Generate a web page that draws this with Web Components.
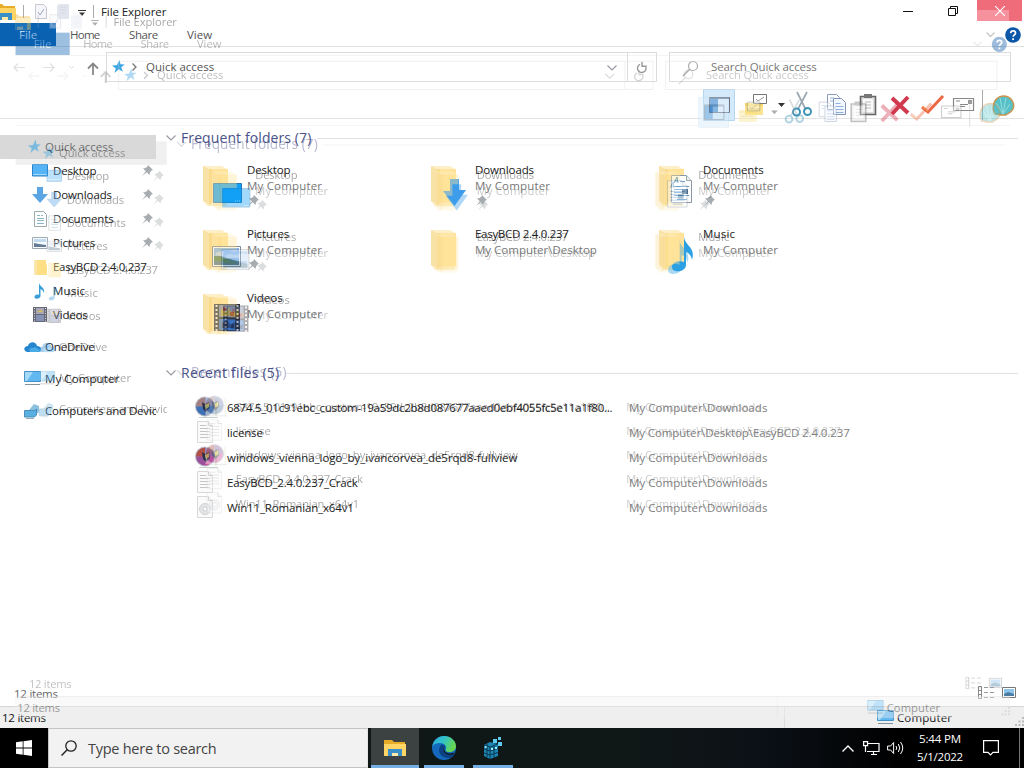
<!DOCTYPE html>
<html lang="en">
<head>
<meta charset="utf-8">
<title>File Explorer</title>
<style>
  html, body { margin: 0; height: 100%; overflow: hidden; background: #fff; }
  body { font-family: "Open Sans", "Noto Sans", sans-serif; font-size: 11.5px; color: #222; }
</style>
</head>
<body>
<desk-top></desk-top>

<script>
/* ═══════════════════════════════════════════════════════════════
   Icons: name -> [width, height, svg content]
   ═══════════════════════════════════════════════════════════════ */
const FOLDER = `
  <path d="M2 5h19l5 3v37H6l-4-5z" fill="#fdefc8"/>
  <path d="M2 5l6 3v35l-6-3z" fill="#f9e2a6"/>
  <path d="M8 8h19v33l-19 1z" fill="#ffe39a"/>
  <path d="M8 8h3v34l-3 3z" fill="#fada8c"/>`;

const ORB = (a, b, c, d) => `
  <path d="M2 2h21v19H2z" fill="#fff"/><path d="M5 21.5h19" stroke="#c4d2d0"/><path d="M22 3v17" stroke="#d8dbb0"/>
  <circle cx="11" cy="10.5" r="10" fill="#b9b9c6"/>
  <path d="M11 1.500a9 9 0 0 0-9 9l9 1z" fill="${a}"/><path d="M11 1.500a9 9 0 0 1 9 9l-9 1z" fill="${b}"/>
  <path d="M2 10.500a9 9 0 0 0 9 9v-9z" fill="${c}"/><path d="M20 10.500a9 9 0 0 1-9 9v-9z" fill="${d}"/>
  <path d="M8 6l3 2 4-2 1 6-4 4-3-3z" fill="#252f48"/><path d="M11 9l4-2v4l-3 2z" fill="#d8c13c"/>`;

const PAPER = `
  <path d="M3.500.5h11l4 4v17h-15z" fill="#fbfbfb" stroke="#d8d8d8"/><path d="M14.500.5v4h4" fill="#eee" stroke="#bbb"/>`;

const ICONS = {
  explorer: [24, 20, `<path d="M1 2h8l2 2h11v14H1z" fill="#e8ad28"/><path d="M1 6h22v12H1z" fill="#ffd565"/><path d="M5 18v-7h14v7h-4v-3H9v3z" fill="#3a8fc8"/><path d="M9 18v-3h6v3z" fill="#ffe9a8"/>`],
  props: [12, 15, `<path d="M.5.5h8l3 3v11H.5z" fill="#f5f5fa" stroke="#c8c8d2"/><path d="M3 8l2 3 4-6" fill="none" stroke="#9aa7c0"/>`],
  newdoc: [12, 15, `<path d="M0 2l2-2h10v15H0z" fill="#e2e5ee"/><path d="M3 3h6M3 6h6M3 9h6" stroke="#d3d8e3"/>`],
  drop: [8, 6, `<path d="M0 .5h8" stroke="#333"/><path d="M1 2.500h6L4 6z" fill="#333"/>`],
  caret: [7, 4, `<path d="M0 0h7L3.500 4z" fill="#333"/>`],
  min: [10, 10, `<path d="M0 5.500h10" stroke="#111"/>`],
  restore: [10, 10, `<path d="M.5 2.500h7v7h-7zM2.500 2.500v-2h7v7h-2" fill="none" stroke="#111"/>`],
  close: [10, 10, `<path d="M0 0l10 10M10 0L0 10" stroke="#fff" stroke-width="1.200"/>`],
  chev: [10, 6, `<path d="M.5.5L5 5l4.500-4.500" fill="none" stroke="#9a9aa4" stroke-width="1.200"/>`],
  chevlight: [9, 5, `<path d="M.5.5l4 4 4-4" fill="none" stroke="#c4c4c4" stroke-width="1.200"/>`],
  help: [16, 16, `<circle cx="8" cy="8" r="7.800" fill="#0b57a8"/><path d="M5.700 6.200c0-3 4.800-3 4.800 0 0 1.600-2.400 1.700-2.400 3.600" fill="none" stroke="#fff" stroke-width="1.700"/><path d="M7.200 11.300h1.800v1.800H7.200z" fill="#fff"/>`],
  back: [12, 9, `<path d="M12 4.500H1M5 .5l-4 4 4 4" fill="none" stroke="#e0e0e0" stroke-width="1.200"/>`],
  fwd: [12, 9, `<path d="M0 4.500h11M7 .5l4 4-4 4" fill="none" stroke="#e0e0e0" stroke-width="1.200"/>`],
  dot: [5, 3, `<path d="M0 0l2.500 2.500L5 0" fill="none" stroke="#e0e0e0"/>`],
  up: [12, 13, `<path d="M6 13V1.500M1 6.500l5-5 5 5" fill="none" stroke="#888" stroke-width="1.800"/>`],
  star: [13, 13, `<path d="M7.500 0l1 4.200 4.300.2-3.600 2.800 1.600 4.500-4-2.500L2.500 13l1.300-4.500L0 5.600l4.800-.4z" fill="#3aa5e2"/>`],
  right: [5, 8, `<path d="M.5.5L4 4 .5 7.500" fill="none" stroke="#777" stroke-width="1.300"/>`],
  refresh: [12, 13, `<path d="M9.500 5A4.300 4.300 0 1 1 4 3.300" fill="none" stroke="#999" stroke-width="1.400"/><path d="M6 .7v4.500h4.500" fill="none" stroke="#999" stroke-width="1.400"/>`],
  search: [17, 17, `<circle cx="11" cy="6" r="4.500" fill="none" stroke="#aaa" stroke-width="1.200"/><path d="M7.700 9.300L1 16" stroke="#aaa" stroke-width="1.400"/>`],
  // ribbon
  pane: [32, 32, `<path d="M.5.500h31v31H.5z" fill="#d4e9f9" stroke="#b4d6f0"/><path d="M6.500 8.500h20v15h-20z" fill="#dfeefa" stroke="#666f7c"/><path d="M7 9h8v14H7z" fill="#4c8fcf"/><path d="M7 9.500h19" stroke="#6a7890"/>`],
  newfolder: [24, 26, `<path d="M1 11h8l2-2h8v13H1z" fill="#f4d765"/><path d="M1 14h18v9H1z" fill="#fbe48f"/><path d="M3 17h13" stroke="#cfae48"/><path d="M9.500 2.500h13v9h-13z" fill="#fff" stroke="#777"/><path d="M12 7l2 2 6-4" fill="none" stroke="#999"/>`],
  cut: [24, 28, `<path d="M17 1L8 18M7 1l9 18" stroke="#9aa8b2" stroke-width="1.700"/><circle cx="6.500" cy="21" r="3.500" fill="none" stroke="#3f93b8" stroke-width="2"/><circle cx="17.500" cy="20.500" r="3.500" fill="none" stroke="#3f93b8" stroke-width="2"/>`],
  copy: [22, 26, `<path d="M1.500 2.500h9l3 3v12h-12z" fill="#fff" stroke="#8a9bb6"/><path d="M7.500 6.500h8l4 4v12h-12z" fill="#f2f7ff" stroke="#8496b4"/><path d="M9.500 11.500h5m-5 3h8m-8 3h8m-8 3h8M4 6h4M4 9h3" stroke="#8fb0dd"/>`],
  paste: [20, 26, `<path d="M2.500 4.500h15v18h-15z" fill="#ddd" stroke="#666" stroke-width="1.600"/><path d="M5 7h10v13H5z" fill="#fafafa"/><path d="M6 2h8v4H6z" fill="#777"/><path d="M7 10h6m-6 3h6m-6 3h6" stroke="#bbb"/>`],
  del: [22, 22, `<path d="M3 4l16 15M19 3L3 20" stroke="#d1394e" stroke-width="4"/>`],
  check: [26, 24, `<path d="M3 14l6 5L24 3" fill="none" stroke="#ec6845" stroke-width="3"/><path d="M4 14l5 4" stroke="#f3a154" stroke-width="1.500"/>`],
  mail: [24, 18, `<path d="M1.500 2.500h20v12h-20z" fill="#fff" stroke="#888" stroke-width="1.200"/><path d="M4 5h4M8 8.500h8M8 10.500h5" stroke="#888"/><path d="M16 4h4v4h-4z" fill="#999"/>`],
  shell: [36, 30, `<path d="M1.500 0v30" stroke="#aaa"/><g transform="translate(8 3)"><path d="M6 21C2 14 5 4 14 3c9 0 12 8 10 13-2 4-5 4-7 6h-6c-1-1-3-1-5-1z" fill="#57c0c6" stroke="#cb9450" stroke-width="1.500"/><path d="M14 21L7 10M14 21L11 5M14 21l3-16M14 21l7-10" stroke="#95dde0"/></g>`],
  // tree
  desktop: [16, 13, `<path d="M.5.500h15v11.500H.5z" fill="#55b4f5" stroke="#2a84c9"/><path d="M1 10.500h14" stroke="#a5dafc"/>`],
  download: [16, 16, `<path d="M5 0h6v7h5l-8 9-8-9h5z" fill="#5aa5e4"/>`],
  doc: [15, 16, `<g transform="translate(2 0)"><path d="M.5.500h9l3 3v12H.5z" fill="#fff" stroke="#9cabab"/><path d="M3 4.500h3m1 0h2M3 7.500h7M3 9.500h7M3 12.500h7" stroke="#8ab5c5"/></g>`],
  picture: [16, 12, `<path d="M.5.500h15v11H.5z" fill="#f7fbff" stroke="#a0a8b0"/><path d="M2 2h12v3H2z" fill="#c0dbef"/><path d="M2 10V6l5 1 7 1v2z" fill="#627d95"/>`],
  folder: [15, 16, `<g transform="translate(2 0)"><path d="M0 1h12v4l1 1v10H0z" fill="#ffdf86"/><path d="M0 1h3v15H0z" fill="#fbe7ac"/></g>`],
  music: [15, 16, `<path transform="translate(2 0)" d="M5 0c1 4 6 4 5 10-1-3-3-3.500-3.500-4v7c0 3-6 4-6 1C.5 12 3 11 5 12z" fill="#3a9edb"/>`],
  video: [15, 15, `<g transform="translate(1 0)"><path d="M0 0h14v15H0z" fill="#666876"/><path d="M3 1h8v6H3z" fill="#a9a7b4"/><path d="M3 8h8v6H3z" fill="#8692b5"/><path d="M1.500 1v14M12.500 1v14" stroke="#ddd" stroke-dasharray="1 1.500"/><path d="M4 5l4-2 2 2z" fill="#d6c05b"/></g>`],
  onedrive: [17, 10, `<path d="M4 10c-5 0-5-6 0-6 1-5 8-5 9 0 5 0 5 6 1 6z" fill="#2586cf"/><path d="M6 10c-2-3 1-5 3-4 2-2 5 0 5 1 3 0 3 3 1 3z" fill="#4aaae6"/>`],
  computer: [17, 15, `<path d="M.5.500h16v10H.5z" fill="#62b8f0" stroke="#4592c6"/><path d="M1 1h8L3 10H1z" fill="#a4daf8"/><path d="M1 13.500h15" stroke="#82929d"/>`],
  network: [17, 16, `<path d="M5 7l5-6 5 2v6l-5 4z" fill="#8ac1df"/><path d="M.5 7.500h10l2-1.500v6l-2 2H.5z" fill="#59aee2" stroke="#4a8fb9"/><path d="M2 15.500h8" stroke="#9ab"/>`],
  pin: [11, 11, `<path d="M6 0l5 5-1.500.5L8 7.500l-.5 2.500L4.700 7.200 0 11l3.800-4.700L1 3.500 3.500 3 5.500 1.500z" fill="#a6acb0"/>`],
  // large folders
  bigdesktop: [48, 48, FOLDER + `<path d="M12.500 22.500h28v19h-28z" fill="#12a1f6" stroke="#2678b5"/><path d="M34 40h6" stroke="#cfefff" stroke-dasharray="1 1"/>`],
  bigdownload: [48, 48, FOLDER + `<path d="M21 18h9v11h7L25.500 45 14 30h7z" fill="#3f9deb"/>`],
  bigdoc: [48, 48, FOLDER + `<path d="M14.500 14.500h15l5 5v22h-20z" fill="#fff" stroke="#8b96a8"/><path d="M29.500 14.500v5h5" fill="#eee" stroke="#9aa"/><path d="M17 22l3-6 1 6M18 20h3" fill="none" stroke="#2c7baa"/><path d="M23 20.500h5M17 25.500h15M17 28.500h8M17 31.500h8M17 34.500h15M20 38.500h10" stroke="#5b97ca"/><path d="M25 28h6v5h-6z" fill="#366386"/>`],
  bigpicture: [48, 48, FOLDER + `<path d="M11.500 21.500h28v20h-28z" fill="#fff" stroke="#7b8791"/><path d="M13 23h25v17H13z" fill="#7eb0ea"/><path d="M15 28c5-4 10 0 15-2s6 0 8 1v6H13z" fill="#bdd8f1"/><path d="M13 31c9-1 12 3 25 5v4H13z" fill="#4d768c"/><path d="M13 31l8 1 6 4H13z" fill="#517d47"/>`],
  bigfolder: [48, 48, FOLDER],
  bigmusic: [48, 48, FOLDER + `<path d="M27 12c1 9 12 10 8 23-1-6-5-8-6-8v13c0 7-14 9-14 2 0-5 7-7 12-5z" fill="#2ca0e3"/>`],
  bigvideo: [48, 48, FOLDER + `<path d="M13 15h26v27H13z" fill="#2c2f3c"/><path d="M18 16h16v12H18z" fill="#7a8aa6"/><path d="M18 30h16v11H18z" fill="#3b74c4"/><path d="M20 20l5 3 3-5 2 6 4-2v5H20z" fill="#b8a13c"/><path d="M22 18h3v4h-3zM29 23h4v4h-4z" fill="#a34441"/><path d="M21 34l5-3 4 5 3-2v5H21z" fill="#24365f"/><path d="M15.500 16v26M36.500 16v26" stroke="#f0ecd7" stroke-width="2" stroke-dasharray="2 2"/>`],
  // files
  orb1: [26, 24, ORB('#a57f80', '#8391bd', '#3c71b8', '#5e80ad')],
  orb2: [26, 24, ORB('#b04f43', '#8b6ca3', '#9a519b', '#cc4f99')],
  text: [26, 24, PAPER + `<path d="M6 7.500h10M6 10.500h10M6 13.500h10M6 16.500h10M6 4.500h6" stroke="#c5c5c5"/>`],
  iso: [26, 24, PAPER + `<circle cx="11" cy="13" r="5.500" fill="#e2e4e6" stroke="#d0d2d4"/><circle cx="11" cy="13" r="2" fill="#fff" stroke="#ccc"/>`],
  // footer
  list: [17, 13, `<path d="M.5.500h3v12h-3z" fill="none" stroke="#888"/><path d="M1 4.500h3M1 8.500h3" stroke="#888"/><path d="M6 1.500h4m2 0h4M6 6.500h4m2 0h4M6 11.500h4m2 0h4" stroke="#999"/>`],
  thumbs: [14, 11, `<path d="M.5.500h13v10H.5z" fill="#fff" stroke="#777"/><path d="M2 2h10v7H2z" fill="#8dc4ea"/><path d="M2 7l4-2 6 2v2H2z" fill="#4c7ca4"/>`],
  grip: [9, 9, `<path d="M7 0h2v2H7zM7 3.500h2v2H7zM7 7h2v2H7zM3.500 3.500h2v2h-2zM3.500 7h2v2h-2zM0 7h2v2H0z" fill="#bcbcbc"/>`],
  // taskbar
  start: [16, 16, `<path d="M0 2.300L6.700 1.300v6.300H0zM7.500 1.200L16 0v7.600H7.500zM0 8.400h6.700v6.300L0 13.700zM7.500 8.400H16V16l-8.500-1.200z" fill="#fff"/>`],
  tasksearch: [16, 16, `<circle cx="10" cy="6" r="5.200" fill="none" stroke="#222" stroke-width="1.300"/><path d="M6.200 9.800L.5 15.500" stroke="#222" stroke-width="1.500"/>`],
  edge: [24, 24, `<defs><linearGradient id="eg" x1="0" y1="0" x2="1" y2=".4"><stop offset="0" stop-color="#2aa5dd"/><stop offset=".5" stop-color="#31c4c8"/><stop offset="1" stop-color="#66d552"/></linearGradient></defs>
    <circle cx="12" cy="12" r="12" fill="#1569bd"/><path d="M.3 10C2 3 7 0 12 0c7 0 12 5 12 10 0 4-3 6-7 6-3 0-4-1-3-3 1-3-2-6-6-6-3 0-6 1-7.700 3z" fill="url(#eg)"/><path d="M9 9c-5 6 0 14 9 13 2-1 4-3 5-5-4 2-9 2-11-1-1-2-1-4 1-6-1-1-3-2-4-1z" fill="#0b4286"/><path d="M13 10c-2 4 0 7 5 7.500 2 0 3-.5 4.500-1.200L21 18.500c-3 .8-7 .2-9-2.500-1-2-1-4 1-6z" fill="#101817"/>`],
  regedit: [22, 22, `<path d="M2 8l6-3 8 2v12l-8 3-6-3z" fill="#1b86b4"/><path d="M2 8l6 2 8-3M8 10v12M2 12l6 2 8-2.500M2 16l6 2 8-2.500M5 7v13M12 8v13" fill="none" stroke="#0d3850"/><path d="M3 9h1.500v2H3zM9 11h2v2H9zM13 10h2v2h-2z" fill="#a4e9ff"/><path d="M11 2h4v4h-4zM16 5h4v4h-4zM16 0h3v3h-3z" fill="#5ecbf0"/>`],
  trayup: [12, 7, `<path d="M.5 6.500L6 1l5.500 5.500" fill="none" stroke="#fff" stroke-width="1.400"/>`],
  net: [17, 14, `<path d="M5 2.500h11v8H4M8 13.500h6M10.500 10v3" fill="none" stroke="#fff" stroke-width="1.200"/><path d="M.6.600h4v4h-4zM2.500 5v6" fill="#111" stroke="#fff" stroke-width="1.200"/>`],
  sound: [17, 14, `<path d="M.6 5h3l3-3.500v11L3.600 9h-3z" fill="none" stroke="#fff"/><path d="M9 5q1.500 2 0 4M11.300 3q3 4 0 8M13.500 1q4.500 6 0 12" fill="none" stroke="#fff"/>`],
  action: [16, 16, `<path d="M.6.600h14.800v11.800H10L7.500 15 5 12.400H.6z" fill="none" stroke="#fff" stroke-width="1.200"/>`],
};

/* <ui-icon name="star"> — inline SVG, optional w / h to rescale */
class UiIcon extends HTMLElement {
  connectedCallback() {
    if (this.shadowRoot) return;
    const [w, h, body] = ICONS[this.getAttribute('name')];
    this.attachShadow({ mode: 'open' }).innerHTML = `
      <style>:host { display: block; flex: none; line-height: 0; } svg { display: block; }</style>
      <svg width="${this.getAttribute('w') || w}" height="${this.getAttribute('h') || h}" viewBox="0 0 ${w} ${h}">${body}</svg>`;
  }
}
customElements.define('ui-icon', UiIcon);

/* <ui-label w="65"> — one line of text, tracked to fill w pixels */
class UiLabel extends HTMLElement {
  connectedCallback() {
    if (this.shadowRoot) return;
    this.attachShadow({ mode: 'open' }).innerHTML = `
      <style>:host { display: block; flex: none; white-space: nowrap; } span { display: inline-block; vertical-align: top; }</style>
      <span><slot></slot></span>`;
    const w = parseFloat(this.getAttribute('w'));
    if (!w) return;
    const span = this.shadowRoot.querySelector('span');
    this.style.letterSpacing = (w - span.offsetWidth) / this.textContent.length + 'px';
    this.style.width = w + 'px';
  }
}
customElements.define('ui-label', UiLabel);

/* <tree-item icon label w> — navigation pane row */
class TreeItem extends HTMLElement {
  connectedCallback() {
    if (this.shadowRoot) return;
    const top = this.hasAttribute('top');
    this.attachShadow({ mode: 'open' }).innerHTML = `
      <style>
        :host { display: flex; align-items: center; height: 24px; box-sizing: border-box;
                padding: 0 0 1px ${top ? 24 : 32}px; overflow: hidden; }
        :host([selected]) { background: #d9d9d9; }
        :host([gap]) { margin-top: 8px; }
        ui-label { margin-bottom: 1px; }
        .icon { display: flex; justify-content: ${this.hasAttribute('selected') ? 'flex-end' : 'flex-start'}; width: 17px; margin-right: 4px; }
        .pin { margin-left: auto; padding-right: 3px; }
      </style>
      <div class="icon"><ui-icon name="${this.getAttribute('icon')}"></ui-icon></div>
      <ui-label w="${this.getAttribute('w')}">${this.getAttribute('label')}</ui-label>
      ${this.hasAttribute('pinned') ? '<ui-icon class="pin" name="pin"></ui-icon>' : ''}`;
  }
}
customElements.define('tree-item', TreeItem);

/* <group-head w="130"> — collapsible group title with its rule */
class GroupHead extends HTMLElement {
  connectedCallback() {
    if (this.shadowRoot) return;
    this.attachShadow({ mode: 'open' }).innerHTML = `
      <style>
        :host { display: flex; align-items: center; height: 20px; font-size: 14px; color: #4a5288; }
        ui-label { margin: 0 6px 2px 5px; }
        i { flex: 1; height: 1px; background: #e2e2e6; }
      </style>
      <ui-icon name="chev"></ui-icon>
      <ui-label w="${this.getAttribute('w')}">${this.textContent}</ui-label><i></i>`;
  }
}
customElements.define('group-head', GroupHead);

/* <folder-tile icon name w path pw pinned> */
class FolderTile extends HTMLElement {
  connectedCallback() {
    if (this.shadowRoot) return;
    const a = n => this.getAttribute(n);
    this.attachShadow({ mode: 'open' }).innerHTML = `
      <style>
        :host { display: flex; height: 64px; }
        .text { display: flex; flex-direction: column; line-height: 16px; margin: 1px 0 0 -2px; }
        .path { color: #777; }
        .pin { margin: 1px 0 0 1px; }
      </style>
      <ui-icon name="${a('icon')}"></ui-icon>
      <div class="text">
        <ui-label w="${a('w')}">${a('name')}</ui-label>
        <ui-label class="path" w="${a('pw')}">${a('path')}</ui-label>
        ${this.hasAttribute('pinned') ? '<ui-icon class="pin" name="pin"></ui-icon>' : ''}
      </div>`;
  }
}
customElements.define('folder-tile', FolderTile);

/* <file-row icon name w path pw> */
class FileRow extends HTMLElement {
  connectedCallback() {
    if (this.shadowRoot) return;
    const a = n => this.getAttribute(n);
    this.attachShadow({ mode: 'open' }).innerHTML = `
      <style>
        :host { display: grid; grid-template-columns: 33px 402px 1fr; align-items: center; height: 25px; }
        .path { color: #808080; }
      </style>
      <ui-icon name="${a('icon')}"></ui-icon>
      <ui-label w="${a('w')}">${a('name')}</ui-label>
      <ui-label class="path" w="${a('pw')}">${a('path')}</ui-label>`;
  }
}
customElements.define('file-row', FileRow);

const TREE = [
  ['star', 'Quick access', 68, 'top selected'],
  ['desktop', 'Desktop', 43, 'pinned'],
  ['download', 'Downloads', 59, 'pinned'],
  ['doc', 'Documents', 61, 'pinned'],
  ['picture', 'Pictures', 42, 'pinned'],
  ['folder', 'EasyBCD 2.4.0.237', 94, ''],
  ['music', 'Music', 32, ''],
  ['video', 'Videos', 35, ''],
  ['onedrive', 'OneDrive', 50, 'top gap'],
  ['computer', 'My Computer', 74, 'top gap'],
  ['network', 'Computers and Devic', 112, 'top gap'],
];
const FOLDERS = [
  ['bigdesktop', 'Desktop', 43, 'My Computer', 75, 'pinned'],
  ['bigdownload', 'Downloads', 59, 'My Computer', 75, 'pinned'],
  ['bigdoc', 'Documents', 61, 'My Computer', 75, 'pinned'],
  ['bigpicture', 'Pictures', 42, 'My Computer', 75, 'pinned'],
  ['bigfolder', 'EasyBCD 2.4.0.237', 94, 'My Computer\\Desktop', 122, ''],
  ['bigmusic', 'Music', 32, 'My Computer', 75, ''],
  ['bigvideo', 'Videos', 36, 'My Computer', 75, ''],
];
const FILES = [
  ['orb1', '6874.5_01c91ebc_custom-19a59dc2b8d087677aaed0ebf4055fc5e11a1f80...', 385, 'My Computer\\Downloads', 138],
  ['text', 'license', 36, 'My Computer\\Desktop\\EasyBCD 2.4.0.237', 221],
  ['orb2', 'windows_vienna_logo_by_ivancorvea_de5rqd8-fullview', 290, 'My Computer\\Downloads', 138],
  ['text', 'EasyBCD_2.4.0.237_Crack', 131, 'My Computer\\Downloads', 138],
  ['iso', 'Win11_Romanian_x64v1', 127, 'My Computer\\Downloads', 138],
];

/* <explorer-window> — the whole File Explorer window, see-through */
class ExplorerWindow extends HTMLElement {
  connectedCallback() {
    if (this.shadowRoot) return;
    this.attachShadow({ mode: 'open' }).innerHTML = `
      <style>
        :host { display: flex; flex-direction: column; width: 1024px; height: 728px; overflow: hidden; }
        :host([fading]) .win { visibility: hidden; }
        .row { display: flex; align-items: center; flex: none; }
        .title { height: 23px; }
        .title .app { margin-left: -7px; }
        .sep { width: 1px; height: 13px; background: #aaa; }
        .win { display: flex; margin-left: auto; align-self: flex-start; align-items: center; height: 21px; }
        .close { display: flex; align-items: center; justify-content: center; width: 45px; height: 21px; margin: 0 2px 0 19px; background: linear-gradient(#f6929d, #f6929d) 0 100% / 32px 11px no-repeat #ef6c7b; }
        .tabs { height: 24px; box-sizing: border-box; border-bottom: 1px solid #e0e0e0; color: #555; }
        .file { display: flex; align-items: center; width: 37px; height: 23px; padding-left: 19px; background: #0a62b2; color: #d8eaff; }
        .addr { height: 41px; padding: 0 12px 1px 12px; box-sizing: border-box; }
        .box { display: flex; align-items: center; height: 28px; border: 1px solid #dcdcdc; color: #555; }
        .box ui-label { margin-bottom: 2px; }
        .ribbon { height: 31px; justify-content: flex-end; border-bottom: 1px solid #e4e4e4; box-sizing: border-box; padding-right: 7px; }
        .ribbon ui-icon { margin-bottom: -4px; }
        .body { display: flex; flex: 1; min-height: 0; }
        nav { width: 156px; padding-top: 16px; flex: none; overflow: hidden; }
        main { flex: 1; padding: 9px 6px 0 10px; }
        .tiles { display: grid; grid-template-columns: repeat(3, 228px); margin: 13px 0 0 35px; }
        .recent { margin-top: 10px; }
        .files { margin: 12px 0 0 28px; }
        .details { height: 24px; padding: 0 8px 0 14px; color: #666; }
        .details ui-label { margin-bottom: 2px; }
        .status { height: 22px; box-sizing: border-box; border-top: 1px solid #d5d5d5; background: #efefef; padding-left: 2px; }
        .status i { width: 1px; height: 22px; background: #dedede; margin-left: auto; }
      </style>
      <div class="row title">
        <ui-icon class="app" name="explorer"></ui-icon>
        <div class="sep" style="margin:0 11px 0 6px"></div>
        <ui-icon name="props"></ui-icon>
        <ui-icon name="newdoc" style="margin-left:10px"></ui-icon>
        <ui-icon name="drop" style="margin:2px 7px 0 9px"></ui-icon>
        <div class="sep"></div>
        <ui-label w="65" style="margin-left:7px">File Explorer</ui-label>
        <div class="win">
          <ui-icon name="min"></ui-icon>
          <ui-icon name="restore" style="margin-left:35px"></ui-icon>
          <div class="close"><ui-icon name="close"></ui-icon></div>
        </div>
      </div>
      <div class="row tabs">
        <div class="file"><ui-label w="18">File</ui-label></div>
        <ui-label w="30" style="margin-left:14px">Home</ui-label>
        <ui-label w="29" style="margin-left:29px">Share</ui-label>
        <ui-label w="25" style="margin-left:29px">View</ui-label>
        <ui-icon name="chevlight" style="margin:0 10px 0 auto"></ui-icon>
        <ui-icon name="help" style="margin-right:3px"></ui-icon>
      </div>
      <div class="row addr">
        <ui-icon name="back" style="margin-left:1px"></ui-icon>
        <ui-icon name="fwd" style="margin-left:18px"></ui-icon>
        <ui-icon name="dot" style="margin-left:14px"></ui-icon>
        <ui-icon name="up" style="margin:2px 7px 0 13px"></ui-icon>
        <div class="box" style="width:520px">
          <ui-icon name="star" style="margin:0 0 2px 5px"></ui-icon>
          <ui-icon name="right" style="margin:0 9px 0 7px"></ui-icon>
          <ui-label w="68">Quick access</ui-label>
          <ui-icon name="chev" style="margin:2px 10px 0 auto"></ui-icon>
        </div>
        <div class="box" style="width:28px;border-left:0;justify-content:center"><ui-icon name="refresh"></ui-icon></div>
        <div class="box" style="width:340px;margin-left:12px">
          <ui-icon name="search" style="margin:2px 12px 0 12px"></ui-icon>
          <ui-label w="106" style="color:#777">Search Quick access</ui-label>
        </div>
      </div>
      <div class="row ribbon">
        <ui-icon name="pane"></ui-icon>
        <ui-icon name="newfolder" style="margin-left:9px"></ui-icon>
        <ui-icon name="caret" style="margin-left:10px"></ui-icon>
        <ui-icon name="cut" style="margin-left:5px"></ui-icon>
        <ui-icon name="copy" style="margin-left:12px"></ui-icon>
        <ui-icon name="paste" style="margin-left:10px"></ui-icon>
        <ui-icon name="del" style="margin-left:11px"></ui-icon>
        <ui-icon name="check" style="margin-left:8px"></ui-icon>
        <ui-icon name="mail" style="margin-left:7px"></ui-icon>
        <ui-icon name="shell" style="margin-left:5px"></ui-icon>
      </div>
      <div class="body">
        <nav>${TREE.map(([icon, label, w, flags]) =>
          `<tree-item icon="${icon}" label="${label}" w="${w}" ${flags}></tree-item>`).join('')}</nav>
        <main>
          <group-head w="130">Frequent folders (7)</group-head>
          <div class="tiles">${FOLDERS.map(([icon, name, w, path, pw, pin]) =>
            `<folder-tile icon="${icon}" name="${name}" w="${w}" path="${path}" pw="${pw}" ${pin}></folder-tile>`).join('')}</div>
          <group-head class="recent" w="99">Recent files (5)</group-head>
          <div class="files">${FILES.map(([icon, name, w, path, pw]) =>
            `<file-row icon="${icon}" name="${name}" w="${w}" path="${path}" pw="${pw}"></file-row>`).join('')}</div>
        </main>
      </div>
      <div class="row details">
        <ui-label w="44">12 items</ui-label>
        <ui-icon name="list" style="margin:-3px 0 0 auto"></ui-icon>
        <ui-icon name="thumbs" style="margin:-3px 0 0 7px"></ui-icon>
      </div>
      <div class="row status">
        <ui-label w="44" style="color:#111">12 items</ui-label>
        <i></i>
        <ui-icon name="computer" style="margin:0 3px 0 92px"></ui-icon>
        <ui-label w="55" style="color:#111">Computer</ui-label>
        <ui-icon name="grip" style="margin:8px 0 0 63px"></ui-icon>
      </div>`;
  }
}
customElements.define('explorer-window', ExplorerWindow);

class TaskBar extends HTMLElement {
  connectedCallback() {
    if (this.shadowRoot) return;
    this.attachShadow({ mode: 'open' }).innerHTML = `
      <style>
        :host { display: flex; align-items: stretch; height: 40px; background: linear-gradient(90deg, #101817 60%, #0b1016 75%, #000 88%); color: #fff; }
        div { display: flex; align-items: center; justify-content: center; box-sizing: border-box; }
        .start { width: 48px; background: #000; }
        .search { width: 320px; justify-content: flex-start; padding-left: 12px; background: #f2f2f2; border: 1px solid #c4c4c4; border-right-color: #e5e5e5; color: #444; font-size: 14.5px; }
        .search ui-label { margin-left: 11px; }
        .app { width: 40px; border-bottom: 3px solid #74aee3; padding-top: 3px; }
        .active { width: 48px; background: #3c4242; margin-left: 3px; }
        .tray { margin-left: auto; }
        .clock { flex-direction: column; line-height: 18px; width: 48px; margin: 0 19px 0 11px; }
        .show { width: 1px; background: #777; margin: 0 4px 0 20px; }
      </style>
      <div class="start"><ui-icon name="start"></ui-icon></div>
      <div class="search"><ui-icon name="tasksearch"></ui-icon><ui-label w="128">Type here to search</ui-label></div>
      <div class="app active"><ui-icon name="explorer"></ui-icon></div>
      <div class="app" style="margin-left:5px"><ui-icon name="edge"></ui-icon></div>
      <div class="app" style="margin-left:9px"><ui-icon name="regedit"></ui-icon></div>
      <div class="tray">
        <ui-icon name="trayup"></ui-icon>
        <ui-icon name="net" style="margin-left:9px"></ui-icon>
        <ui-icon name="sound" style="margin:0 1px 0 7px"></ui-icon>
      </div>
      <div class="clock"><ui-label w="42">5:44 PM</ui-label><ui-label w="46">5/1/2022</ui-label></div>
      <div><ui-icon name="action"></ui-icon></div>
      <div class="show"></div>`;
  }
}
customElements.define('task-bar', TaskBar);

/* <desk-top> — window caught mid-animation: solid frame plus a smaller fading one */
class DeskTop extends HTMLElement {
  connectedCallback() {
    this.attachShadow({ mode: 'open' }).innerHTML = `
      <style>
        :host { display: flex; flex-direction: column; width: 1024px; height: 768px; position: relative; overflow: hidden; background: #fff; }
        [fading] { position: absolute; inset: 0 auto auto 0; transform-origin: 0 0; transform: translate(15.3px, 10.3px) scale(.9714); opacity: .4; pointer-events: none; }
      </style>
      <explorer-window></explorer-window>
      <explorer-window fading></explorer-window>
      <task-bar></task-bar>`;
  }
}
customElements.define('desk-top', DeskTop);
</script>
</body>
</html>
